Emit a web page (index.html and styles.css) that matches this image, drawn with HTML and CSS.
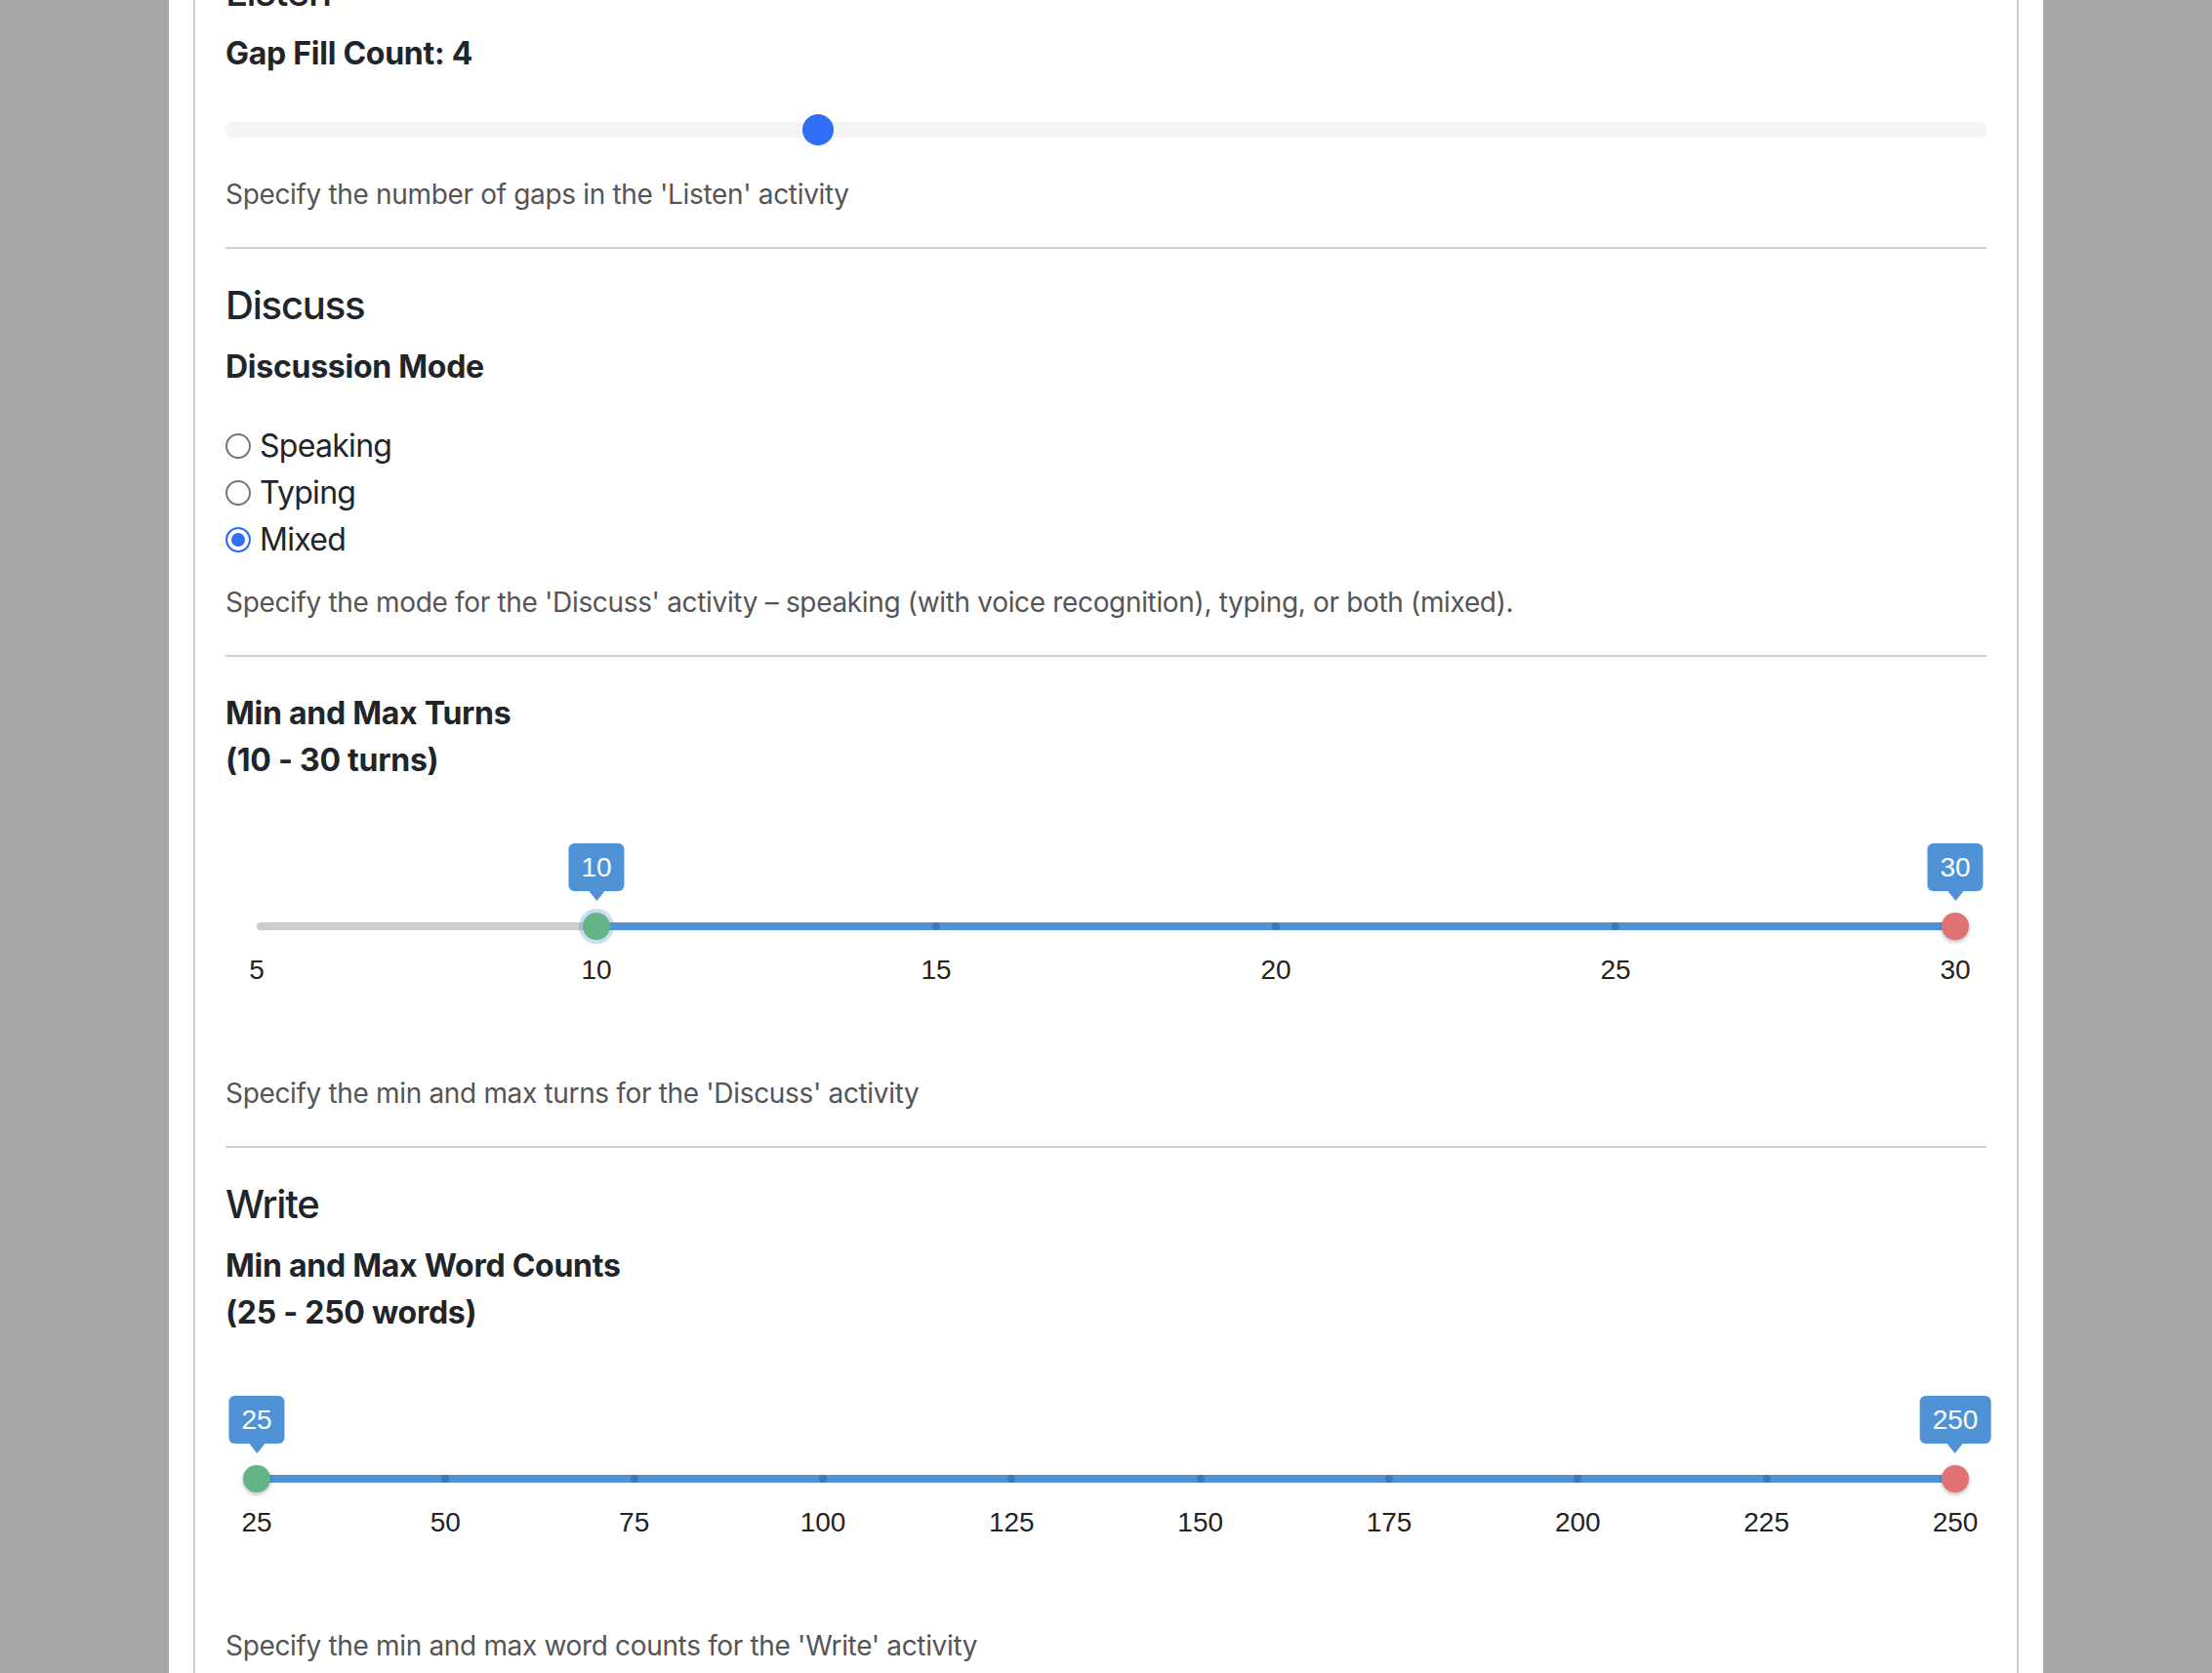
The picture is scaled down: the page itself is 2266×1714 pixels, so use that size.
FILE: index.html
```html
<!DOCTYPE html>
<html lang="en">
<head>
<meta charset="utf-8">
<title>Activity Settings</title>
<link rel="stylesheet" href="styles.css">
</head>
<body>
<div class="page">
  <div class="card">
    <h2 class="section-title">Listen</h2>
    <div class="field">
      <div class="field-label">Gap Fill Count: 4</div>
      <input class="range" type="range" min="1" max="10" value="4">
      <p class="help">Specify the number of gaps in the 'Listen' activity</p>
    </div>
    <hr class="divider">

    <h2 class="section-title">Discuss</h2>
    <div class="field">
      <div class="field-label">Discussion Mode</div>
      <div class="radios">
        <label class="radio"><input type="radio" name="mode"><span>Speaking</span></label>
        <label class="radio"><input type="radio" name="mode"><span>Typing</span></label>
        <label class="radio"><input type="radio" name="mode" checked><span>Mixed</span></label>
      </div>
      <p class="help">Specify the mode for the 'Discuss' activity – speaking (with voice recognition), typing, or both (mixed).</p>
    </div>
    <hr class="divider">

    <div class="field">
      <div class="field-label">Min and Max Turns<br>(10 - 30 turns)</div>
      <div class="dual">
        <div class="rail">
          <div class="fill" style="left:20%;right:0%"></div>
          <span class="tick" style="left:40%"></span>
          <span class="tick" style="left:60%"></span>
          <span class="tick" style="left:80%"></span>
          <span class="handle handle-min focused" style="left:20%"><span class="bubble">10</span></span>
          <span class="handle handle-max" style="left:100%"><span class="bubble">30</span></span>
        </div>
        <div class="scale">
          <span class="mark" style="left:0%">5</span>
          <span class="mark" style="left:20%">10</span>
          <span class="mark" style="left:40%">15</span>
          <span class="mark" style="left:60%">20</span>
          <span class="mark" style="left:80%">25</span>
          <span class="mark" style="left:100%">30</span>
        </div>
      </div>
      <p class="help">Specify the min and max turns for the 'Discuss' activity</p>
    </div>
    <hr class="divider">

    <h2 class="section-title">Write</h2>
    <div class="field">
      <div class="field-label">Min and Max Word Counts<br>(25 - 250 words)</div>
      <div class="dual">
        <div class="rail">
          <div class="fill" style="left:0%;right:0%"></div>
          <span class="tick" style="left:11.111%"></span>
          <span class="tick" style="left:22.222%"></span>
          <span class="tick" style="left:33.333%"></span>
          <span class="tick" style="left:44.444%"></span>
          <span class="tick" style="left:55.556%"></span>
          <span class="tick" style="left:66.667%"></span>
          <span class="tick" style="left:77.778%"></span>
          <span class="tick" style="left:88.889%"></span>
          <span class="handle handle-min" style="left:0%"><span class="bubble">25</span></span>
          <span class="handle handle-max" style="left:100%"><span class="bubble">250</span></span>
        </div>
        <div class="scale">
          <span class="mark" style="left:0%">25</span>
          <span class="mark" style="left:11.111%">50</span>
          <span class="mark" style="left:22.222%">75</span>
          <span class="mark" style="left:33.333%">100</span>
          <span class="mark" style="left:44.444%">125</span>
          <span class="mark" style="left:55.556%">150</span>
          <span class="mark" style="left:66.667%">175</span>
          <span class="mark" style="left:77.778%">200</span>
          <span class="mark" style="left:88.889%">225</span>
          <span class="mark" style="left:100%">250</span>
        </div>
      </div>
      <p class="help">Specify the min and max word counts for the 'Write' activity</p>
    </div>
    <hr class="divider">
  </div>
</div>
</body>
</html>
```
FILE: styles.css
```css
* { box-sizing: border-box; }

html, body {
  margin: 0;
  padding: 0;
}

body {
  background: #a9a9a9;
  font-family: "Inter", "Liberation Sans", Arial, sans-serif;
  color: #212529;
}

.page {
  width: 1920px;
  margin: 0 auto;
  background: #ffffff;
  min-height: 100vh;
  display: flow-root;
}

.card {
  margin: -74px 25px 0;
  border: 2px solid #d2d2d2;
  padding: 40px 31px 60px;
}

.section-title {
  font-size: 40px;
  line-height: 48px;
  font-weight: 500;
  margin: 0 0 15px;
  letter-spacing: -0.03em;
}

.field-label {
  font-size: 32px;
  line-height: 48px;
  font-weight: 700;
  letter-spacing: -0.008em;
}

.help {
  font-size: 28px;
  line-height: 42px;
  color: #555555;
  margin: 0;
  letter-spacing: -0.012em;
}

.divider {
  border: 0;
  height: 2px;
  background: #cfcfcf;
  margin: 33px 0 34px;
}

/* single range */
.range {
  -webkit-appearance: none;
  appearance: none;
  display: block;
  width: 100%;
  height: 32px;
  margin: 38px 0 29px;
  padding: 0;
  background: transparent;
}
.range::-webkit-slider-runnable-track {
  height: 16px;
  background: #f3f4f6;
  border-radius: 8px;
}
.range::-webkit-slider-thumb {
  -webkit-appearance: none;
  appearance: none;
  width: 32px;
  height: 32px;
  margin-top: -8px;
  border: 0;
  border-radius: 50%;
  background: #2f6ef5;
}

/* radios */
.radios {
  margin: 33px 0 19px;
  display: flex;
  flex-direction: column;
}
.radio {
  display: flex;
  align-items: center;
  font-size: 32px;
  line-height: 48px;
  letter-spacing: -0.022em;
}
.radio input {
  -webkit-appearance: none;
  appearance: none;
  width: 26px;
  height: 26px;
  margin: 0 9px 0 0;
  border: 2px solid #767676;
  border-radius: 50%;
  background: #ffffff;
  flex: none;
}
.radio input:checked {
  border-color: #2f6ef5;
  background: #2f6ef5;
  box-shadow: inset 0 0 0 4px #ffffff;
}

/* dual slider */
.dual {
  height: 296px;
  padding: 142px 32px 0;
  font-family: "Liberation Sans", Arial, sans-serif;
}
.rail {
  position: relative;
  height: 8px;
  border-radius: 4px;
  background: #cccccc;
}
.fill {
  position: absolute;
  top: 0;
  bottom: 0;
  background: #4f93d6;
  border-radius: 4px;
}
.tick {
  position: absolute;
  top: 0;
  width: 8px;
  height: 8px;
  margin-left: -4px;
  border-radius: 50%;
  background: rgba(30, 70, 120, 0.35);
}
.handle {
  position: absolute;
  top: -10px;
  width: 28px;
  height: 28px;
  margin-left: -14px;
  border-radius: 50%;
  box-shadow: 0 2px 4px rgba(0, 0, 0, 0.28);
}
.handle-min { background: #64b585; }
.handle-max { background: #e07272; }
.handle.focused {
  box-shadow: 0 0 0 4px rgba(79, 147, 214, 0.3);
}
.bubble {
  position: absolute;
  bottom: 50px;
  left: 50%;
  transform: translateX(-50%);
  height: 49px;
  line-height: 49px;
  padding: 0 13px;
  border-radius: 6px;
  background: #4f93d6;
  color: #ffffff;
  font-size: 28px;
  white-space: nowrap;
}
.bubble::after {
  content: "";
  position: absolute;
  top: 100%;
  left: 50%;
  margin-left: -8px;
  border-left: 8px solid transparent;
  border-right: 8px solid transparent;
  border-top: 10px solid #4f93d6;
}
.scale {
  position: relative;
  height: 32px;
  margin-top: 25px;
}
.mark {
  position: absolute;
  top: 0;
  transform: translateX(-50%);
  font-size: 28px;
  line-height: 32px;
  color: #222222;
}
```
